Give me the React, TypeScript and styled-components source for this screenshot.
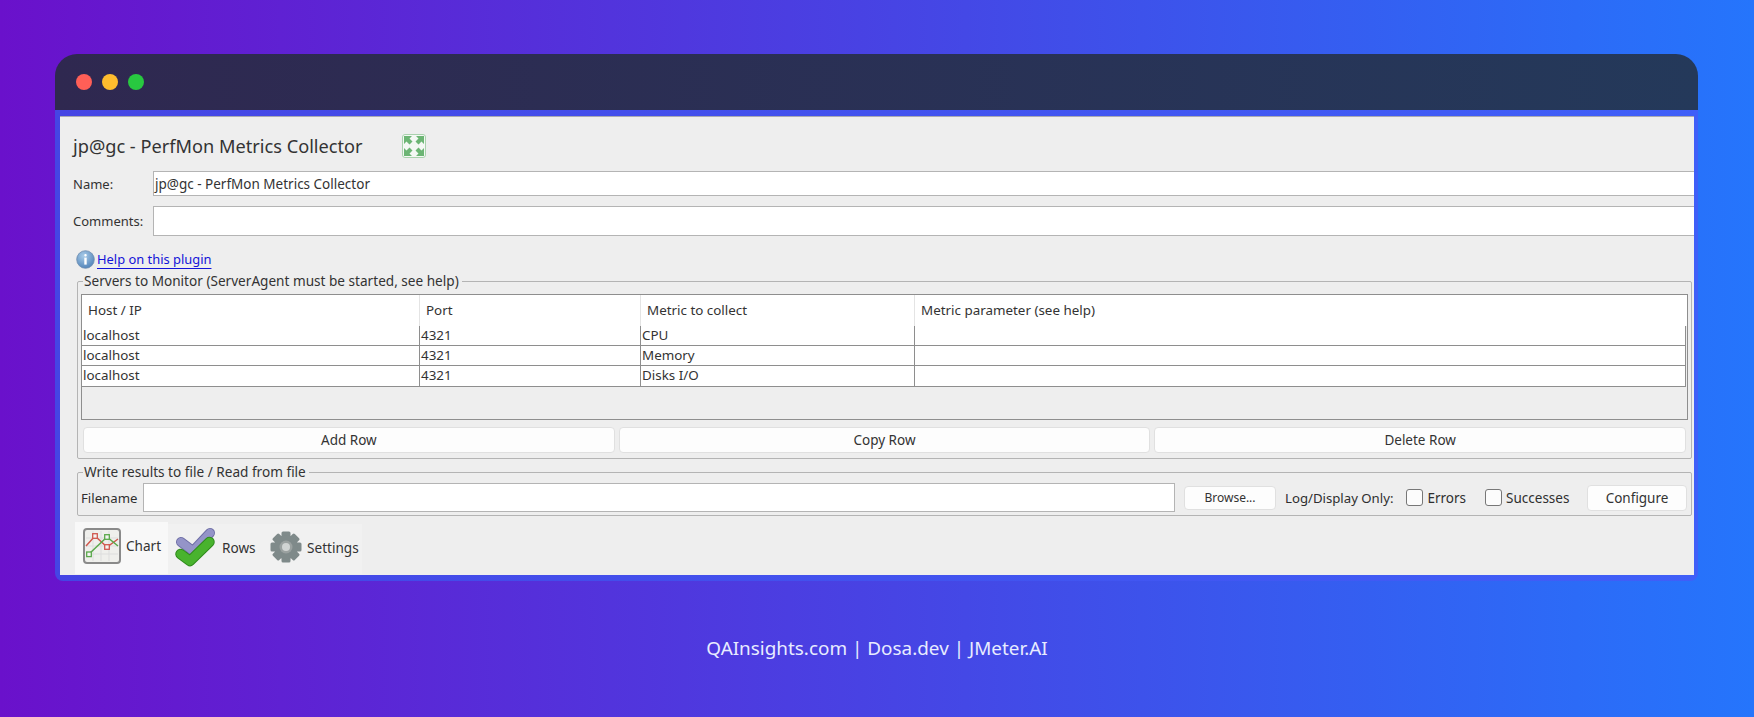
import React from "react";
import styled, { createGlobalStyle } from "styled-components";

const Global = createGlobalStyle`
  html, body { margin: 0; padding: 0; height: 100%; }
  body { background: linear-gradient(to right, #6a11cb, #2575fc); font-family: "Noto Sans", "Open Sans", sans-serif; overflow: hidden; }
  #root { height: 717px; }
`;

const Page = styled.div`
  width: 1754px;
  height: 717px;
  padding: 54px 56px 0 55px;
  box-sizing: border-box;
  display: flex;
  flex-direction: column;
`;
const Win = styled.div`
  display: flex;
  flex-direction: column;
  height: 527px;
`;
const TitleBar = styled.div`
  height: 56px;
  flex: none;
  box-sizing: border-box;
  border-radius: 22px 22px 0 0;
  background: linear-gradient(to right, #2f2850, #24395a);
  display: flex;
  align-items: center;
  padding: 0 0 0 21px;
  gap: 10px;
`;
const Dot = styled.span<{ $c: string }>`
  width: 16px;
  height: 16px;
  border-radius: 50%;
  background: ${(p) => p.$c};
`;
const Frame = styled.div`
  flex: 1;
  background: linear-gradient(to right, #4545e4, #3f5ff8);
  padding: 6px 4px 6px 5px;
  border-radius: 0 0 8px 8px;
  display: flex;
  box-sizing: border-box;
`;
const Content = styled.div`
  flex: 1;
  background: #eeeeee;
  border-top: 1px solid #a9a9b4;
  box-sizing: border-box;
  display: flex;
  flex-direction: column;
  color: #2e2e2e;
  font-size: 13.5px;
  min-width: 0;
`;
const Head = styled.div`
  height: 54px;
  display: flex;
  align-items: center;
  padding-left: 13px;
  gap: 39px;
  font-size: 18.2px;
  color: #333;
  padding-top: 3px;
  box-sizing: border-box;
  flex: none;
`;
const FormRow = styled.div<{ $h: number; $mb: number }>`
  display: flex;
  align-items: center;
  height: ${(p) => p.$h}px;
  margin-bottom: ${(p) => p.$mb}px;
  flex: none;
`;
const RowLabel = styled.label`
  padding-left: 13px;
  box-sizing: content-box;
  width: 80px;
  flex: none;
  font-size: 13px;
  color: #333;
`;
const TextBox = styled.div`
  flex: 1;
  align-self: stretch;
  background: #fff;
  border: 1px solid #b4b4b4;
  border-right: none;
  display: flex;
  align-items: center;
  padding-left: 1px;
  font-size: 13.5px;
  box-sizing: border-box;
  color: #333;
`;
const HelpRow = styled.div`
  display: flex;
  align-items: center;
  height: 22px;
  padding-left: 16px;
  gap: 2px;
  margin: 12px 0 4px;
  flex: none;
`;
const HelpLink = styled.a`
  color: #1414d8;
  font-size: 12.9px;
  text-decoration: underline;
  text-underline-offset: 4px;
`;
const Group = styled.fieldset`
  margin: 0 2px 0 17px;
  padding: 6px 3px 5px 3px;
  border: 1px solid #b4b4b4;
  border-radius: 2px;
  box-sizing: border-box;
  min-width: 0;
  flex: none;
`;
const Legend = styled.legend`
  font-size: 13.6px;
  line-height: 14px;
  padding: 0 3px 0 1px;
  margin-left: 2px;
  color: #333;
`;
const TableBox = styled.div`
  border: 1px solid #8e8e8e;
  height: 126px;
  box-sizing: border-box;
  display: flex;
  flex-direction: column;
`;
const cols = "338px 221px 274px 1fr";
const HeadRow = styled.div`
  display: grid;
  grid-template-columns: ${cols};
  height: 31px;
  background: #fff;
  flex: none;
`;
const HeadCell = styled.div`
  display: flex;
  align-items: center;
  padding: 0 0 2px 6px;
  border-right: 1px solid #e4e4e4;
  font-size: 13.4px;
  color: #333;
  &:last-child { border-right: none; }
`;
const BodyRow = styled.div`
  display: grid;
  grid-template-columns: ${cols};
  height: 20.2px;
  background: #fff;
  border-bottom: 1px solid #8e8e8e;
  box-sizing: border-box;
  flex: none;
  margin-right: 1px;
  border-right: 1px solid #8e8e8e;
`;
const BodyCell = styled.div`
  display: flex;
  align-items: center;
  padding: 0 0 2px 1px;
  border-right: 1px solid #8e8e8e;
  font-size: 13.4px;
  color: #333;
  &:last-child { border-right: none; }
`;
const ButtonRow = styled.div`
  display: grid;
  grid-template-columns: repeat(3, 1fr);
  gap: 4px;
  margin: 7px 2px 0 2px;
`;
const Btn = styled.div`
  height: 26px;
  background: #fdfdfd;
  border: 1px solid #e0e0e0;
  border-radius: 4px;
  box-sizing: border-box;
  display: flex;
  align-items: center;
  justify-content: center;
  font-size: 13.5px;
  color: #333;
`;
const FileGroup = styled(Group)`
  margin-top: 6px;
  padding: 4px 4px 3px 3px;
`;
const FileRow = styled.div`
  display: flex;
  align-items: center;
  height: 29px;
`;
const FileLabel = styled.span`
  width: 62px;
  flex: none;
  font-size: 13.2px;
`;
const FileInput = styled.div`
  width: 1032px;
  height: 29px;
  flex: none;
  background: #fff;
  border: 1px solid #b4b4b4;
  box-sizing: border-box;
`;
const SmallBtn = styled(Btn)<{ $w: number; $h: number; $fs: number }>`
  width: ${(p) => p.$w}px;
  height: ${(p) => p.$h}px;
  font-size: ${(p) => p.$fs}px;
  flex: none;
`;
const BrowseBtn = styled(SmallBtn)`
  margin-left: 9px;
`;
const ConfigureBtn = styled(SmallBtn)`
  margin-left: auto;
`;
const LogLabel = styled.span`
  margin-left: 9px;
  font-size: 13.2px;
  white-space: nowrap;
`;
const Check = styled.span<{ $ml: number }>`
  width: 15px;
  height: 15px;
  border: 1px solid #777;
  border-radius: 3px;
  background: #fcfcfc;
  margin-left: ${(p) => p.$ml}px;
  flex: none;
`;
const CheckText = styled.span`
  margin-left: 4px;
  font-size: 13.5px;
`;
const Tabs = styled.div`
  display: flex;
  margin: 6px 0 0 15px;
  flex: 1;
  align-items: flex-start;
`;
const Tab = styled.div<{ $active?: boolean; $w: number; $gap: number }>`
  width: ${(p) => p.$w}px;
  height: ${(p) => (p.$active ? 52 : 50)}px;
  margin-top: ${(p) => (p.$active ? 0 : 2)}px;
  background: ${(p) => (p.$active ? "#f8f8f8" : "#f1f1f1")};
  box-sizing: border-box;
  display: flex;
  align-items: center;
  padding: 0 0 ${(p) => (p.$active ? 5 : 4)}px ${(p) => (p.$active ? 8 : 7)}px;
  gap: ${(p) => p.$gap}px;
  font-size: 13.6px;
  color: #333;
`;
const Footer = styled.div`
  margin-top: 55px;
  text-align: center;
  color: #e8ecff;
  font-size: 18.9px;
  line-height: 24px;
  margin-left: -55px;
  margin-right: -56px;
  white-space: pre;
`;

const ExpandIcon = () => (
  <svg width="24" height="24" viewBox="0 0 24 24">
    <rect x="0.5" y="0.5" width="23" height="23" rx="2.5" fill="#f4f8f4" stroke="#a9d2ad" />
    <path d="M2 2 h8 l-2.5 2.5 l3 3 l-3 3 l-3-3 l-2.5 2.5z M22 2 v8 l-2.5-2.5 l-3 3 l-3-3 l3-3 l-2.5-2.5z M2 22 v-8 l2.5 2.5 l3-3 l3 3 l-3 3 l2.5 2.5z M22 22 h-8 l2.5-2.5 l-3-3 l3-3 l3 3 l2.5-2.5z" fill="#6cb574" />
  </svg>
);
const InfoIcon = () => (
  <svg width="19" height="19" viewBox="0 0 19 19">
    <defs>
      <radialGradient id="inf" cx="40%" cy="30%" r="75%">
        <stop offset="0" stopColor="#a9cbe8" />
        <stop offset="1" stopColor="#4f82b8" />
      </radialGradient>
    </defs>
    <circle cx="9.5" cy="9.5" r="8.8" fill="url(#inf)" stroke="#6d8db0" strokeWidth="0.8" />
    <rect x="8.3" y="4" width="2.4" height="2.4" rx="1" fill="#fff" />
    <rect x="8.3" y="7.6" width="2.4" height="7" fill="#fff" />
  </svg>
);
const ChartIcon = () => (
  <svg width="38" height="36" viewBox="0 0 38 36">
    <rect x="1" y="1" width="36" height="34" rx="3" fill="#efefec" stroke="#8a8a8a" strokeWidth="2" />
    <path d="M3 10H35M3 18H35M3 26H35M10 3V33M18 3V33M26 3V33" stroke="#dddddd" strokeWidth="1" />
    <path d="M3 18 L12 8 L24 19 L35 11" fill="none" stroke="#d0584e" strokeWidth="1.5" />
    <path d="M6 26 L24 9 L35 18" fill="none" stroke="#5aa84a" strokeWidth="1.5" />
    <rect x="9.7" y="5.7" width="4.6" height="4.6" fill="#f4f4f2" stroke="#d0584e" strokeWidth="1.3" />
    <rect x="21.7" y="16.7" width="4.6" height="4.6" fill="#f4f4f2" stroke="#d0584e" strokeWidth="1.3" />
    <rect x="3.7" y="24" width="4.6" height="4.6" fill="#f4f4f2" stroke="#5aa84a" strokeWidth="1.3" />
    <rect x="21.7" y="6.7" width="4.6" height="4.6" fill="#f4f4f2" stroke="#5aa84a" strokeWidth="1.3" />
  </svg>
);
const ChecksIcon = () => (
  <svg width="40" height="40" viewBox="0 0 40 40">
    <path d="M6 15 L18 24 L35 6" fill="none" stroke="#6f6fa6" strokeWidth="10" strokeLinecap="round" strokeLinejoin="round" />
    <path d="M6 15 L18 24 L35 6" fill="none" stroke="#9494c8" strokeWidth="8" strokeLinecap="round" strokeLinejoin="round" />
    <path d="M5.5 27 L15 34 L34.5 15" fill="none" stroke="#2f8a1c" strokeWidth="10.5" strokeLinecap="round" strokeLinejoin="round" />
    <path d="M5.5 27 L15 34 L34.5 15" fill="none" stroke="#49b32e" strokeWidth="8.5" strokeLinecap="round" strokeLinejoin="round" />
  </svg>
);
const GearIcon = () => {
  const teeth = [0, 45, 90, 135, 180, 225, 270, 315];
  return (
    <svg width="32" height="32" viewBox="0 0 32 32">
      {teeth.map((a) => (
        <rect key={a} x="11.5" y="0.5" width="9" height="8" rx="1.5" fill="#7f8a8a" transform={`rotate(${a} 16 16)`} />
      ))}
      <circle cx="16" cy="16" r="12" fill="#7f8a8a" />
      <circle cx="16" cy="16" r="6.5" fill="#9aa1a0" />
      <circle cx="16" cy="16" r="4" fill="#d0d4d3" />
    </svg>
  );
};

const rows = [
  ["localhost", "4321", "CPU", ""],
  ["localhost", "4321", "Memory", ""],
  ["localhost", "4321", "Disks I/O", ""],
];

export default function App() {
  return (
    <Page>
      <Global />
      <Win>
        <TitleBar>
          <Dot $c="#ff5f57" />
          <Dot $c="#febc2e" />
          <Dot $c="#28c840" />
        </TitleBar>
        <Frame>
          <Content>
            <Head>
              <span>jp@gc - PerfMon Metrics Collector</span>
              <ExpandIcon />
            </Head>
            <FormRow $h={25} $mb={10}>
              <RowLabel>Name:</RowLabel>
              <TextBox>jp@gc - PerfMon Metrics Collector</TextBox>
            </FormRow>
            <FormRow $h={30} $mb={0}>
              <RowLabel>Comments:</RowLabel>
              <TextBox />
            </FormRow>
            <HelpRow>
              <InfoIcon />
              <HelpLink>Help on this plugin</HelpLink>
            </HelpRow>
            <Group>
              <Legend>Servers to Monitor (ServerAgent must be started, see help)</Legend>
              <TableBox>
                <HeadRow>
                  <HeadCell>Host / IP</HeadCell>
                  <HeadCell>Port</HeadCell>
                  <HeadCell>Metric to collect</HeadCell>
                  <HeadCell>Metric parameter (see help)</HeadCell>
                </HeadRow>
                {rows.map((r, i) => (
                  <BodyRow key={i}>
                    {r.map((c, j) => (
                      <BodyCell key={j}>{c}</BodyCell>
                    ))}
                  </BodyRow>
                ))}
              </TableBox>
              <ButtonRow>
                <Btn>Add Row</Btn>
                <Btn>Copy Row</Btn>
                <Btn>Delete Row</Btn>
              </ButtonRow>
            </Group>
            <FileGroup>
              <Legend>Write results to file / Read from file</Legend>
              <FileRow>
                <FileLabel>Filename</FileLabel>
                <FileInput />
                <BrowseBtn $w={92} $h={24} $fs={12}>Browse...</BrowseBtn>
                <LogLabel>Log/Display Only:</LogLabel>
                <Check $ml={13} />
                <CheckText>Errors</CheckText>
                <Check $ml={19} />
                <CheckText>Successes</CheckText>
                <ConfigureBtn $w={100} $h={26} $fs={13.5}>Configure</ConfigureBtn>
              </FileRow>
            </FileGroup>
            <Tabs>
              <Tab $active $w={93} $gap={5}>
                <ChartIcon />
                Chart
              </Tab>
              <Tab $w={95} $gap={7}>
                <ChecksIcon />
                Rows
              </Tab>
              <Tab $w={99} $gap={5}>
                <GearIcon />
                Settings
              </Tab>
            </Tabs>
          </Content>
        </Frame>
      </Win>
      <Footer>QAInsights.com | Dosa.dev | JMeter.AI</Footer>
    </Page>
  );
}
